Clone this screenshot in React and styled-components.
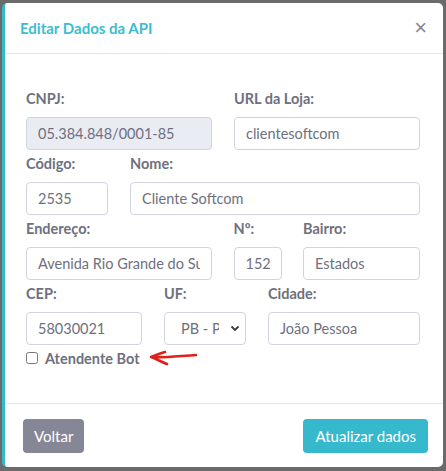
import React from 'react';
import styled, { createGlobalStyle } from 'styled-components';

const GlobalStyle = createGlobalStyle`
  html, body {
    margin: 0;
    padding: 0;
    background: #6b6b6b;
  }
  body {
    font-family: Lato, "Open Sans", sans-serif;
  }
`;

const Page = styled.div`
  width: 446px;
  height: 471px;
  padding: 3px 3px 4px 2px;
  box-sizing: border-box;
`;

const Modal = styled.div`
  height: 100%;
  background: #fff;
  border-left: 3px solid #36b9cc;
  border-radius: 5px;
  display: flex;
  flex-direction: column;
  box-sizing: border-box;
`;

const Header = styled.div`
  height: 50px;
  display: flex;
  align-items: center;
  justify-content: space-between;
  padding: 0 16px 0 15px;
  border-bottom: 1px solid #e3e6f0;
`;

const Title = styled.h5`
  margin: 0;
  font-size: 15px;
  font-weight: 700;
  color: #3bbdd0;
`;

const Close = styled.button`
  border: 0;
  background: none;
  padding: 0;
  color: #858796;
  font-size: 22px;
  line-height: 1;
  cursor: pointer;
`;

const Body = styled.div`
  flex: 1;
  padding: 35px 21px 0 21px;
`;

const Row = styled.div`
  display: grid;
  grid-template-columns: ${(p) => p.cols};
  column-gap: ${(p) => p.gap || '22px'};
  margin-bottom: 4px;
`;

const Field = styled.div`
  display: flex;
  flex-direction: column;
`;

const Label = styled.label`
  height: 20px;
  line-height: 20px;
  margin-bottom: 8px;
  font-size: 14.5px;
  font-weight: 700;
  color: #6e707e;
`;

const Input = styled.input`
  height: 33px;
  box-sizing: border-box;
  width: 100%;
  border: 1px solid #d1d3e2;
  border-radius: 4px;
  padding: 0 11px;
  font-family: inherit;
  font-size: 14.5px;
  color: #6e707e;
  background: ${(p) => (p.readOnly ? '#eaecf4' : '#fff')};
  outline: none;
`;

const SelectBox = styled.div`
  position: relative;
  height: 33px;
`;

const Select = styled.select`
  appearance: none;
  height: 33px;
  width: 100%;
  box-sizing: border-box;
  border: 1px solid #d1d3e2;
  border-radius: 4px;
  padding: 0 26px 0 16px;
  font-family: inherit;
  font-size: 14.5px;
  color: #6e707e;
  background: #fff;
  outline: none;
`;

const Chevron = styled.svg`
  position: absolute;
  right: 6px;
  top: 13px;
  pointer-events: none;
`;

const CheckRow = styled.div`
  display: flex;
  align-items: center;
  gap: 7px;
  margin-top: 3px;
`;

const Check = styled.input`
  margin: 0;
  width: 12px;
  height: 12px;
`;

const CheckLabel = styled.span`
  font-size: 14.5px;
  font-weight: 700;
  color: #6e707e;
`;

const Footer = styled.div`
  height: 63px;
  border-top: 1px solid #e3e6f0;
  display: flex;
  align-items: center;
  justify-content: space-between;
  padding: 0 15px 0 18px;
`;

const Button = styled.button`
  height: 34px;
  border: 0;
  border-radius: 4px;
  padding: 0 ${(p) => (p.primary ? '12px' : '11px')};
  font-family: inherit;
  font-size: 15px;
  color: #fff;
  background: ${(p) => (p.primary ? '#36b9cc' : '#858796')};
  cursor: pointer;
`;

const Arrow = () => (
  <svg width="52" height="18" viewBox="0 0 52 18" style={{ marginLeft: 2 }}>
    <path
      d="M2 8 C14 9 30 7 47 6 M2 8 C7 6 12 4 16 3 M2 8 C7 10 13 13 18 15"
      fill="none"
      stroke="#e0201b"
      strokeWidth="2.6"
      strokeLinecap="round"
    />
  </svg>
);

export default function App() {
  return (
    <>
      <GlobalStyle />
      <Page>
        <Modal>
          <Header>
            <Title>Editar Dados da API</Title>
            <Close>×</Close>
          </Header>
          <Body>
            <Row cols="186px 186px">
              <Field>
                <Label>CNPJ:</Label>
                <Input readOnly value="05.384.848/0001-85" />
              </Field>
              <Field>
                <Label>URL da Loja:</Label>
                <Input defaultValue="clientesoftcom" />
              </Field>
            </Row>
            <Row cols="82px 290px">
              <Field>
                <Label>Código:</Label>
                <Input defaultValue="2535" />
              </Field>
              <Field>
                <Label>Nome:</Label>
                <Input defaultValue="Cliente Softcom" />
              </Field>
            </Row>
            <Row cols="186px 48px 117px" gap="21.5px">
              <Field>
                <Label>Endereço:</Label>
                <Input defaultValue="Avenida Rio Grande do Sul" />
              </Field>
              <Field>
                <Label>Nº:</Label>
                <Input defaultValue="152" />
              </Field>
              <Field>
                <Label>Bairro:</Label>
                <Input defaultValue="Estados" />
              </Field>
            </Row>
            <Row cols="116px 82px 152px">
              <Field>
                <Label>CEP:</Label>
                <Input defaultValue="58030021" />
              </Field>
              <Field>
                <Label>UF:</Label>
                <SelectBox>
                  <Select defaultValue="PB">
                    <option value="PB">PB - Paraíba</option>
                  </Select>
                  <Chevron width="10" height="7" viewBox="0 0 10 7">
                    <path d="M1.5 1.5 L5 5 L8.5 1.5" fill="none" stroke="#343a40" strokeWidth="1.8" />
                  </Chevron>
                </SelectBox>
              </Field>
              <Field>
                <Label>Cidade:</Label>
                <Input defaultValue="João Pessoa" />
              </Field>
            </Row>
            <CheckRow>
              <Check type="checkbox" />
              <CheckLabel>Atendente Bot</CheckLabel>
              <Arrow />
            </CheckRow>
          </Body>
          <Footer>
            <Button>Voltar</Button>
            <Button primary>Atualizar dados</Button>
          </Footer>
        </Modal>
      </Page>
    </>
  );
}
